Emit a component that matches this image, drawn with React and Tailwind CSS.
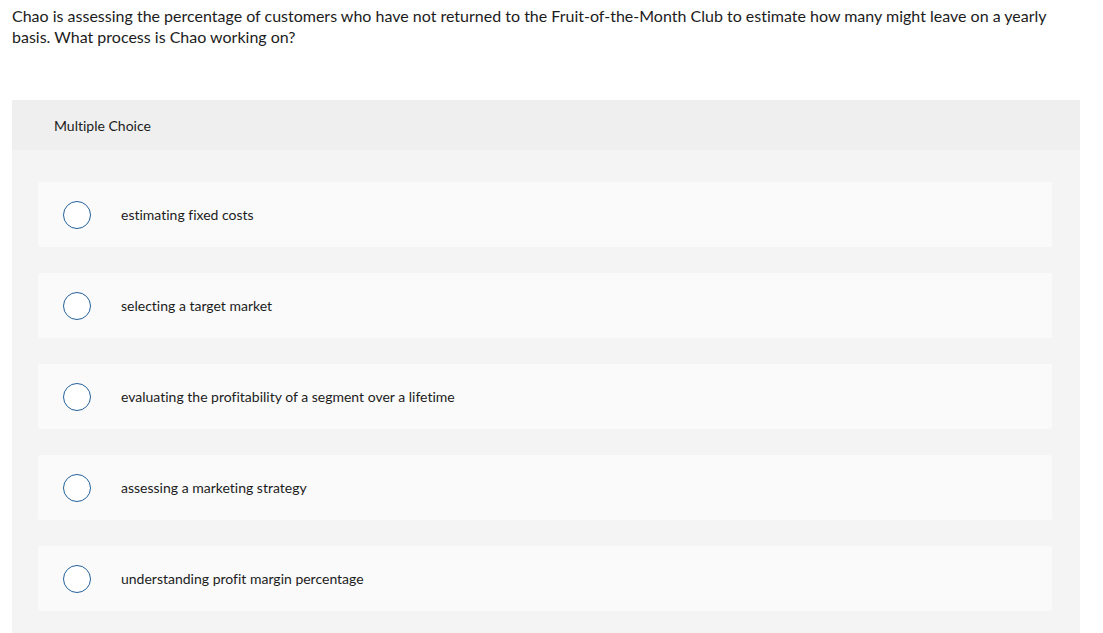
export default function App() {
  const options = [
    "estimating fixed costs",
    "selecting a target market",
    "evaluating the profitability of a segment over a lifetime",
    "assessing a marketing strategy",
    "understanding profit margin percentage",
  ];
  return (
    <div className="w-[1103px] h-[633px] overflow-hidden bg-white text-[#1c1c1c] [font-variant-ligatures:none]" style={{ fontFamily: "Lato, 'Liberation Sans', sans-serif" }}>
      <p className="pl-[12px] pr-[20px] pt-[5px] text-[16px] leading-[21px]">
        Chao is assessing the percentage of customers who have not returned to the Fruit-of-the-Month Club to estimate how many might leave on a yearly basis. What process is Chao working on?
      </p>
      <div className="ml-[12px] mt-[53px] w-[1068px] bg-[#f4f4f4] rounded-t-[2px] pb-[22px]">
        <div className="h-[50px] bg-[#efefef] flex items-center pl-[42px] text-[14px]">Multiple Choice</div>
        <div className="flex flex-col gap-[26px] pt-[32px] pl-[26px] pr-[28px]">
          {options.map((o) => (
            <div key={o} className="h-[65px] bg-[#fafafa] rounded-[3px] flex items-center pl-[25px]">
              <span className="w-[28px] h-[28px] rounded-full border-[1.5px] border-[#23609a] bg-white shrink-0" />
              <span className="ml-[30px] text-[14px]">{o}</span>
            </div>
          ))}
        </div>
      </div>
    </div>
  );
}
